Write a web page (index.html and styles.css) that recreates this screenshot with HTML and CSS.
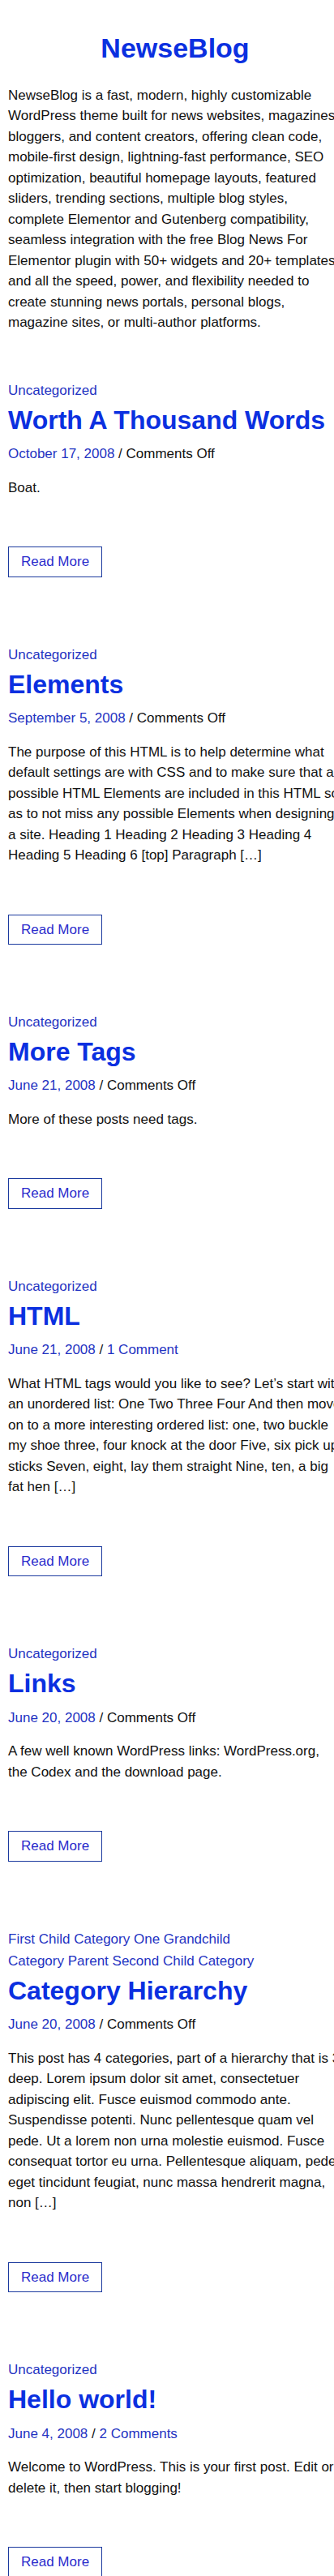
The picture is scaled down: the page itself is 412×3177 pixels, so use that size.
FILE: index.html
```html
<!DOCTYPE html>
<html lang="en">
<head>
<meta charset="utf-8">
<title>NewseBlog</title>
<link rel="stylesheet" href="styles.css">
</head>
<body>
<div class="site">
  <header class="site-header">
    <h1 class="site-title">NewseBlog</h1>
    <p class="site-desc">NewseBlog is a fast, modern, highly customizable WordPress theme built for news websites, magazines, bloggers, and content creators, offering clean code, mobile-first design, lightning-fast performance, SEO optimization, beautiful homepage layouts, featured sliders, trending sections, multiple blog styles, complete Elementor and Gutenberg compatibility, seamless integration with the free Blog News For Elementor plugin with 50+ widgets and 20+ templates, and all the speed, power, and flexibility needed to create stunning news portals, personal blogs, magazine sites, or multi-author platforms.</p>
  </header>

  <main class="posts">
    <article class="post">
      <div class="post-cats"><a href="#">Uncategorized</a></div>
      <h2 class="post-title"><a href="#">Worth A Thousand Words</a></h2>
      <div class="post-meta"><a href="#">October 17, 2008</a> / <span>Comments Off</span></div>
      <p class="post-excerpt">Boat.</p>
      <a class="read-more" href="#">Read More</a>
    </article>

    <article class="post">
      <div class="post-cats"><a href="#">Uncategorized</a></div>
      <h2 class="post-title"><a href="#">Elements</a></h2>
      <div class="post-meta"><a href="#">September 5, 2008</a> / <span>Comments Off</span></div>
      <p class="post-excerpt">The purpose of this HTML is to help determine what default settings are with CSS and to make sure that all possible HTML Elements are included in this HTML so as to not miss any possible Elements when designing a site. Heading 1 Heading 2 Heading 3 Heading 4 Heading 5 Heading 6 [top] Paragraph [&hellip;]</p>
      <a class="read-more" href="#">Read More</a>
    </article>

    <article class="post">
      <div class="post-cats"><a href="#">Uncategorized</a></div>
      <h2 class="post-title"><a href="#">More Tags</a></h2>
      <div class="post-meta"><a href="#">June 21, 2008</a> / <span>Comments Off</span></div>
      <p class="post-excerpt">More of these posts need tags.</p>
      <a class="read-more" href="#">Read More</a>
    </article>

    <article class="post">
      <div class="post-cats"><a href="#">Uncategorized</a></div>
      <h2 class="post-title"><a href="#">HTML</a></h2>
      <div class="post-meta"><a href="#">June 21, 2008</a> / <a href="#">1 Comment</a></div>
      <p class="post-excerpt">What HTML tags would you like to see? Let&rsquo;s start with an unordered list: One Two Three Four And then move on to a more interesting ordered list: one, two buckle my shoe three, four knock at the door Five, six pick up sticks Seven, eight, lay them straight Nine, ten, a big fat hen [&hellip;]</p>
      <a class="read-more" href="#">Read More</a>
    </article>

    <article class="post">
      <div class="post-cats"><a href="#">Uncategorized</a></div>
      <h2 class="post-title"><a href="#">Links</a></h2>
      <div class="post-meta"><a href="#">June 20, 2008</a> / <span>Comments Off</span></div>
      <p class="post-excerpt">A few well known WordPress links: WordPress.org, the Codex and the download page.</p>
      <a class="read-more" href="#">Read More</a>
    </article>

    <article class="post">
      <div class="post-cats"><a href="#">First Child Category</a> <a href="#">One Grandchild Category</a> <a href="#">Parent</a> <a href="#">Second Child Category</a></div>
      <h2 class="post-title"><a href="#">Category Hierarchy</a></h2>
      <div class="post-meta"><a href="#">June 20, 2008</a> / <span>Comments Off</span></div>
      <p class="post-excerpt">This post has 4 categories, part of a hierarchy that is 3 deep. Lorem ipsum dolor sit amet, consectetuer adipiscing elit. Fusce euismod commodo ante. Suspendisse potenti. Nunc pellentesque quam vel pede. Ut a lorem non urna molestie euismod. Fusce consequat tortor eu urna. Pellentesque aliquam, pede eget tincidunt feugiat, nunc massa hendrerit magna, non [&hellip;]</p>
      <a class="read-more" href="#">Read More</a>
    </article>

    <article class="post">
      <div class="post-cats"><a href="#">Uncategorized</a></div>
      <h2 class="post-title"><a href="#">Hello world!</a></h2>
      <div class="post-meta"><a href="#">June 4, 2008</a> / <a href="#">2 Comments</a></div>
      <p class="post-excerpt">Welcome to WordPress. This is your first post. Edit or delete it, then start blogging!</p>
      <a class="read-more" href="#">Read More</a>
    </article>
  </main>
</div>
</body>
</html>
```

FILE: styles.css
```css
html, body {
  margin: 0;
  padding: 0;
  background: #ffffff;
}

body {
  font-family: "Liberation Sans", Arial, sans-serif;
  font-size: 17px;
  line-height: 1.5;
  color: #111111;
}

a {
  color: #1f33c2;
  text-decoration: none;
}

.site {
  width: 100%;
  padding: 0 10px;
}

.site-header {
  padding-top: 39px;
}

.site-title {
  margin: 0;
  font-size: 34px;
  line-height: 1.2;
  font-weight: 700;
  text-align: center;
  color: #0b30e0;
}

.site-desc {
  margin: 25px 0 0;
}

.posts {
  display: flex;
  flex-direction: column;
  gap: 82px;
  padding-top: 57px;
}

.post {
  display: flex;
  flex-direction: column;
  align-items: flex-start;
}

.post-cats {
  max-width: 330px;
  line-height: 27px;
}

.post-title {
  margin: 4px 0 10px;
  font-size: 32px;
  line-height: 1.2;
  font-weight: 700;
}

.post-title a {
  color: #0b30e0;
}

.post-meta {
  margin-bottom: 16px;
}

.post-excerpt {
  margin: 0;
}

.read-more {
  margin-top: 60px;
  padding: 5px 15px;
  border: 1px solid #1c3a9e;
  color: #2a2ccc;
}
```
